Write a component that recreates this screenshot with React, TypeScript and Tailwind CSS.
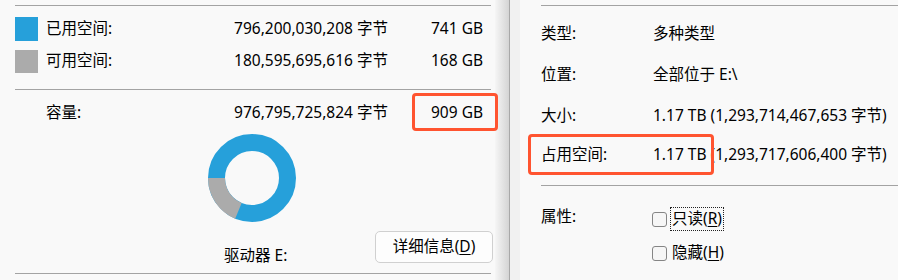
import React from "react";

const font = { fontFamily: '"Noto Sans", "Noto Sans CJK SC", sans-serif' };

function Donut() {
  // center 44,44 ; ring radius 35.5 ; stroke 17
  return (
    <svg width="88" height="88" viewBox="0 0 88 88">
      <circle cx="44" cy="44" r="35.5" fill="none" stroke="#26a0da" strokeWidth="17" />
      <path d="M 30.41 76.80 A 35.5 35.5 0 0 1 8.5 44" fill="none" stroke="#ababab" strokeWidth="17" />
    </svg>
  );
}

function Checkbox() {
  return <span className="inline-block w-[15px] h-[15px] rounded-[3px] border border-[#858585] bg-[#f6f6f6]" />;
}

export default function App() {
  return (
    <div
      className="relative flex w-[898px] h-[280px] overflow-hidden bg-[#f9f9f9] text-[15.5px] leading-none text-black"
      style={font}
    >
      {/* Left window */}
      <div className="w-[495px] shrink-0 pl-[15px] pr-[4px]">
        <div className="relative w-[476px]">
          <div className="mt-[5px] h-px bg-[#a3a3a3]" />
          <div className="mt-[11px] flex flex-col gap-[8px]">
            <div className="flex items-center h-[24px]">
              <span className="w-[23px] h-[24px] bg-[#26a0da]" />
              <span className="ml-[8px] mt-[-1px]">已用空间:</span>
              <span className="ml-auto w-[200px] text-right mt-[-1px]">796,200,030,208 字节</span>
              <span className="w-[95px] text-right mt-[-1px]">741 GB</span>
              <span className="w-[8px]" />
            </div>
            <div className="flex items-center h-[24px]">
              <span className="w-[23px] h-[23px] bg-[#ababab]" />
              <span className="ml-[8px] mt-[-1px]">可用空间:</span>
              <span className="ml-auto w-[200px] text-right mt-[-1px]">180,595,695,616 字节</span>
              <span className="w-[95px] text-right mt-[-1px]">168 GB</span>
              <span className="w-[8px]" />
            </div>
          </div>
          <div className="mt-[16px] h-px bg-[#a3a3a3]" />
          <div className="relative mt-[11px] flex items-center h-[24px]">
            <span className="ml-[31px] mt-[-1px]">容量:</span>
            <span className="ml-auto w-[200px] text-right mt-[-1px]">976,795,725,824 字节</span>
            <span className="w-[95px] text-right mt-[-1px]">909 GB</span>
            <span className="w-[8px]" />
            <div className="absolute left-[397px] top-[-8px] w-[86px] h-[38px] rounded-[4px] border-[3px] border-[#ff5430]" />
          </div>
          <div className="mt-[9px] ml-[193px] w-[88px] h-[88px]">
            <Donut />
          </div>
          <div className="mt-[9px] flex h-[32px]">
            <span className="ml-[209px] self-end mb-0">驱动器 E:</span>
            <button
              className="ml-auto mr-[-2px] w-[118px] h-[32px] rounded-[5px] border border-[#d0d0d0] bg-[#fdfdfd] text-[15.5px] text-black flex items-center justify-center"
              style={font}
            >
              详细信息(<span className="underline underline-offset-2">D</span>)
            </button>
          </div>
          <div className="mt-[10px] h-px bg-[#a3a3a3]" />
        </div>
      </div>

      {/* Shadow / boundary */}
      <div className="w-[14px] shrink-0 bg-gradient-to-r from-[#f6f6f6] to-[#d4d4d4]" />
      <div className="w-px shrink-0 bg-[#a8a8a8]" />
      <div className="w-[10px] shrink-0 bg-[#f1f1f1]" />

      {/* Right window */}
      <div className="relative flex-1 pl-[21px]">
        <div className="mt-[5px] h-px bg-[#a3a3a3]" />
        <div className="mt-[20px] flex items-center h-[16px]">
          <span className="w-[112px]">类型:</span>
          <span>多种类型</span>
        </div>
        <div className="mt-[25px] flex items-center h-[16px]">
          <span className="w-[112px]">位置:</span>
          <span>全部位于 E:\</span>
        </div>
        <div className="mt-[25px] flex items-center h-[16px]">
          <span className="w-[112px]">大小:</span>
          <span>1.17 TB (1,293,714,467,653 字节)</span>
        </div>
        <div className="mt-[23px] flex items-center h-[16px]">
          <span className="w-[112px]">占用空间:</span>
          <span>1.17 TB (1,293,717,606,400 字节)</span>
        </div>
        <div className="absolute left-[8px] top-[134px] w-[186px] h-[41px] rounded-[4px] border-[3px] border-[#ff5430]" />
        <div className="mt-[22px] h-px bg-[#a3a3a3]" />
        <div className="mt-[25px] flex items-start">
          <span className="w-[111px] mt-[-2px]">属性:</span>
          <div className="flex flex-col gap-[18px]">
            <div className="flex items-center h-[16px]">
              <Checkbox />
              <span className="ml-[4px] px-[1px] py-[3px] outline outline-1 outline-dotted outline-[#222] outline-offset-0">
                只读(<span className="underline underline-offset-2">R</span>)
              </span>
            </div>
            <div className="flex items-center h-[16px]">
              <Checkbox />
              <span className="ml-[5px]">
                隐藏(<span className="underline underline-offset-2">H</span>)
              </span>
            </div>
          </div>
        </div>
      </div>
    </div>
  );
}
